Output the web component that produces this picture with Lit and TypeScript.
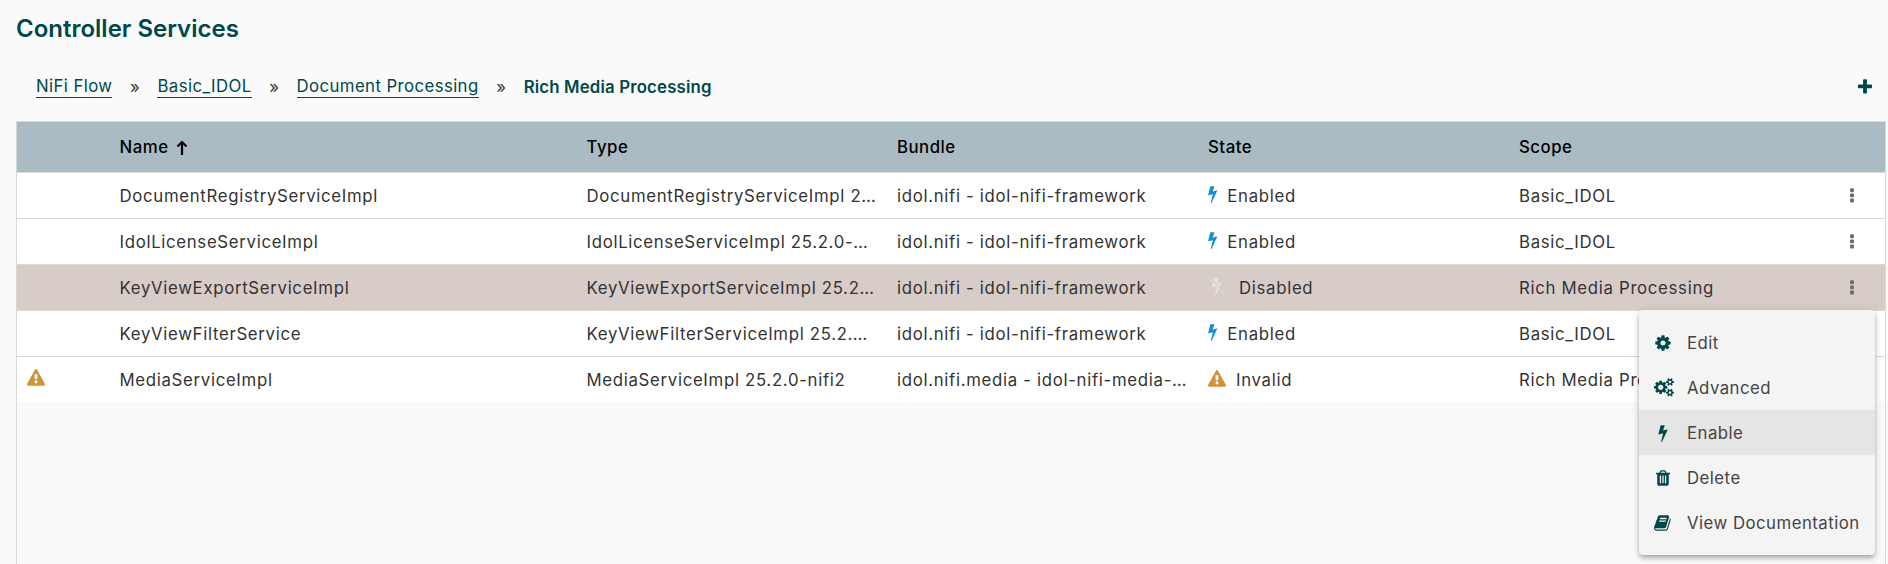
import { LitElement, html, css, svg } from "lit";
import { customElement } from "lit/decorators.js";

const P = {
  bolt: "M1333 566q18 20 7 44l-540 1157q-13 25-42 25-4 0-14-2-17-5-25.5-19t-4.5-30l197-808-406 101q-4 1-12 1-18 0-31-11-18-15-13-39l201-825q4-14 16-23t28-9h328q19 0 32 12.5t13 29.5q0 8-5 18l-171 463 396-98q8-2 12-2 19 0 34 15z",
  cog: "M1152 896q0-106-75-181t-181-75-181 75-75 181 75 181 181 75 181-75 75-181zm512-109v222q0 12-8 23t-20 13l-185 28q-19 54-39 91 35 50 107 138 10 12 10 25t-9 23q-27 37-99 108t-94 71q-12 0-26-9l-138-108q-44 23-91 38-16 136-29 186-7 28-36 28h-222q-14 0-24.5-8.5t-11.5-21.5l-28-184q-49-16-90-37l-141 107q-10 9-25 9-14 0-25-11-126-114-165-168-7-10-7-23 0-12 8-23 15-21 51-66.5t54-70.5q-27-50-41-99l-183-27q-13-2-21-12.5t-8-23.5v-222q0-12 8-23t19-13l186-28q14-46 39-92-40-57-107-138-10-12-10-24 0-10 9-23 26-36 98.5-107.5t94.5-71.5q13 0 26 10l138 107q44-23 91-38 16-136 29-186 7-28 36-28h222q14 0 24.5 8.5t11.5 21.5l28 184q49 16 90 37l142-107q9-9 24-9 13 0 25 10 129 119 165 170 7 8 7 22 0 12-8 23-15 21-51 66.5t-54 70.5q26 50 41 98l183 28q13 2 21 12.5t8 23.5z",
  trash: "M704 1376v-704q0-14-9-23t-23-9h-64q-14 0-23 9t-9 23v704q0 14 9 23t23 9h64q14 0 23-9t9-23zm256 0v-704q0-14-9-23t-23-9h-64q-14 0-23 9t-9 23v704q0 14 9 23t23 9h64q14 0 23-9t9-23zm256 0v-704q0-14-9-23t-23-9h-64q-14 0-23 9t-9 23v704q0 14 9 23t23 9h64q14 0 23-9t9-23zm-544-992h448l-48-117q-7-9-17-11h-317q-10 2-17 11zm928 32v64q0 14-9 23t-23 9h-96v948q0 83-47 143.5t-113 60.5h-832q-66 0-113-58.5t-47-141.5v-952h-96q-14 0-23-9t-9-23v-64q0-14 9-23t23-9h309l70-167q15-37 54-63t79-26h320q40 0 79 26t54 63l70 167h309q14 0 23 9t9 23z",
  book: "M1639 478q40 57 18 129l-275 906q-19 64-76.5 107.5t-122.5 43.5h-923q-77 0-148.5-53.5t-99.5-131.5q-24-67-2-127 0-4 3-27t4-37q1-8-3-21.5t-3-19.5q2-11 8-21t16.5-23.5 16.5-23.5q23-38 45-91.5t30-91.5q3-10 .5-30t-.5-28q3-11 17-28t17-23q21-36 42-92t25-90q1-9-2.5-32t.5-28q4-13 22-30.5t22-22.5q19-26 42.5-84.5t27.5-96.5q1-8-3-25.5t-2-26.5q2-8 9-18t18-23 17-21q8-12 16.5-30.5t15-35 16-36 19.5-32 26.5-23.5 36-11.5 47.5 5.5l-1 3q38-9 51-9h761q74 0 114 56t18 130l-274 906q-36 119-71.5 153.5t-128.5 34.5h-869q-27 0-38 15-11 16-1 43 24 70 144 70h923q29 0 56-15.5t35-41.5l300-987q7-22 5-57 38 15 59 43zm-1064 2q-4 13 2 22.5t20 9.5h608q13 0 25.5-9.5t16.5-22.5l21-64q4-13-2-22.5t-20-9.5h-608q-13 0-25.5 9.5t-16.5 22.5zm-83 256q-4 13 2 22.5t20 9.5h608q13 0 25.5-9.5t16.5-22.5l21-64q4-13-2-22.5t-20-9.5h-608q-13 0-25.5 9.5t-16.5 22.5z",
  warning: "M1024 1375v-190q0-14-9.5-23.5t-22.5-9.5h-192q-13 0-22.5 9.5t-9.5 23.5v190q0 14 9.5 23.5t22.5 9.5h192q13 0 22.5-9.5t9.5-23.5zm-2-374l18-459q0-12-10-19-13-11-24-11h-220q-11 0-24 11-10 7-10 21l17 457q0 10 10 16.5t24 6.5h185q14 0 23.5-6.5t10.5-16.5zm-14-934l768 1408q35 63-2 126-17 29-46.5 46t-63.5 17h-1536q-34 0-63.5-17t-46.5-46q-37-63-2-126l768-1408q17-31 47-49t65-18 65 18 47 49z",
  plus: "M1600 736v192q0 40-28 68t-68 28h-416v416q0 40-28 68t-68 28h-192q-40 0-68-28t-28-68v-416h-416q-40 0-68-28t-28-68v-192q0-40 28-68t68-28h416v-416q0-40 28-68t68-28h192q40 0 68 28t28 68v416h416q40 0 68 28t28 68z",
  cogs: "M896 896q0-106-75-181t-181-75-181 75-75 181 75 181 181 75 181-75 75-181zm768 512q0-52-38-90t-90-38-90 38-38 90q0 53 37.5 90.5t90.5 37.5 90.5-37.5 37.5-90.5zm0-1024q0-52-38-90t-90-38-90 38-38 90q0 53 37.5 90.5t90.5 37.5 90.5-37.5 37.5-90.5zm-384 421v185q0 10-7 19.5t-16 10.5l-155 24q-11 35-32 76 34 48 90 115 7 11 7 20 0 12-7 19-23 30-82.5 89.5t-78.5 59.5q-11 0-21-7l-115-90q-37 19-77 31-11 108-23 155-7 24-30 24h-186q-11 0-20-7.5t-10-17.5l-23-153q-34-10-75-31l-118 89q-7 7-20 7-11 0-21-8-144-133-144-160 0-9 7-19 10-14 41-53t47-61q-23-44-35-82l-152-24q-10-1-17-9.5t-7-19.5v-185q0-10 7-19.5t16-10.5l155-24q11-35 32-76-34-48-90-115-7-11-7-20 0-12 7-20 22-30 82-89t79-59q11 0 21 7l115 90q34-18 77-32 11-108 23-154 7-24 30-24h186q11 0 20 7.5t10 17.5l23 153q34 10 75 31l118-89q8-7 20-7 11 0 21 8 144 133 144 160 0 8-7 19-12 16-42 54t-45 60q23 48 34 82l152 23q10 2 17 10.5t7 19.5zm640 533v140q0 16-149 31-12 27-30 52 51 113 51 138 0 4-4 7-122 71-124 71-8 0-46-47t-52-68q-20 2-30 2t-30-2q-14 21-52 68t-46 47q-2 0-124-71-4-3-4-7 0-25 51-138-18-25-30-52-149-15-149-31v-140q0-16 149-31 13-29 30-52-51-113-51-138 0-4 4-7 4-2 35-20t59-34 30-16q8 0 46 46.5t52 67.5q20-2 30-2t30 2q51-71 92-112l6-2q4 0 124 70 4 3 4 7 0 25-51 138 17 23 30 52 149 15 149 31zm0-1024v140q0 16-149 31-12 27-30 52 51 113 51 138 0 4-4 7-122 71-124 71-8 0-46-47t-52-68q-20 2-30 2t-30-2q-14 21-52 68t-46 47q-2 0-124-71-4-3-4-7 0-25 51-138-18-25-30-52-149-15-149-31v-140q0-16 149-31 13-29 30-52-51-113-51-138 0-4 4-7 4-2 35-20t59-34 30-16q8 0 46 46.5t52 67.5q20-2 30-2t30 2q51-71 92-112l6-2q4 0 124 70 4 3 4 7 0 25-51 138 17 23 30 52 149 15 149 31z",
  dots: "M1088 1248v192q0 40-28 68t-68 28h-192q-40 0-68-28t-28-68v-192q0-40 28-68t68-28h192q40 0 68 28t28 68zm0-512v192q0 40-28 68t-68 28h-192q-40 0-68-28t-28-68v-192q0-40 28-68t68-28h192q40 0 68 28t28 68zm0-512v192q0 40-28 68t-68 28h-192q-40 0-68-28t-28-68v-192q0-40 28-68t68-28h192q40 0 68 28t28 68z",
};

function icon(d: string, cls: string, vb = "0 0 1792 1792") {
  return html`<svg class=${cls} viewBox=${vb} aria-hidden="true">${svg`<path d=${d} fill="currentColor"></path>`}</svg>`;
}

const BOLT_VB = "430 100 930 1700";

const boltSlash = html`<svg class="stoff" viewBox="60 60 1680 1780" aria-hidden="true">
  ${svg`<path d=${P.bolt} fill="currentColor"></path><path d="M200 90 1740 1710" stroke="#d8ccc9" stroke-width="110"></path><path d="M120 140 1660 1760" stroke="currentColor" stroke-width="90"></path>`}
</svg>`;

type Row = { name: string; type: string; bundle: string; state: string; scope: string; sel?: boolean; warn?: boolean };

const ROWS: Row[] = [
  { name: "DocumentRegistryServiceImpl", type: "DocumentRegistryServiceImpl 25.2.0-nifi2", bundle: "idol.nifi - idol-nifi-framework", state: "Enabled", scope: "Basic_IDOL" },
  { name: "IdolLicenseServiceImpl", type: "IdolLicenseServiceImpl 25.2.0-nifi2", bundle: "idol.nifi - idol-nifi-framework", state: "Enabled", scope: "Basic_IDOL" },
  { name: "KeyViewExportServiceImpl", type: "KeyViewExportServiceImpl 25.2.0-nifi2", bundle: "idol.nifi - idol-nifi-framework", state: "Disabled", scope: "Rich Media Processing", sel: true },
  { name: "KeyViewFilterService", type: "KeyViewFilterServiceImpl 25.2.0-nifi2", bundle: "idol.nifi - idol-nifi-framework", state: "Enabled", scope: "Basic_IDOL" },
  { name: "MediaServiceImpl", type: "MediaServiceImpl 25.2.0-nifi2", bundle: "idol.nifi.media - idol-nifi-media-nar", state: "Invalid", scope: "Rich Media Processing", warn: true },
];

const MENU = [
  { t: "Edit", i: icon(P.cog, "mi") },
  { t: "Advanced", i: icon(P.cogs, "mi wide", "0 0 1920 1792") },
  { t: "Enable", i: icon(P.bolt, "mi"), hover: true },
  { t: "Delete", i: icon(P.trash, "mi") },
  { t: "View Documentation", i: icon(P.book, "mi") },
];

@customElement("app-root")
export class AppRoot extends LitElement {
  static styles = css`
    :host {
      display: block;
      position: relative;
      height: 564px;
      overflow: hidden;
      background: #fafafa;
      font-family: Inter, "Liberation Sans", sans-serif;
      font-size: 16.8px;
      color: #333;
    }
    .page { display: flex; flex-direction: column; height: 100%; padding: 0 0 0 16px; box-sizing: border-box; }
    h1 { margin: 0; padding-top: 13px; height: 56px; box-sizing: border-box; font-size: 24px; line-height: 32px; font-weight: 600; color: #004849; letter-spacing: 0; }
    .crumbs { display: flex; align-items: center; height: 62px; margin-bottom: 3px; padding-left: 20px; box-sizing: border-box; font-size: 16.8px; color: #004849; letter-spacing: .4px; }
    .crumbs a { color: #004849; border-bottom: 1px solid #004849; line-height: 21px; }
    .sep { width: 45px; text-align: center; color: #333; letter-spacing: 0; }
    .cur { font-weight: 600; letter-spacing: .17px; }
    .plus { margin-left: auto; width: 18px; height: 18px; color: #004849; margin-right: 14.500px; }
    .table { flex: 1; margin-right: 2px; border-left: 1px solid #d9d9d9; border-right: 1px solid #d9d9d9; border-top: 1px solid #d9d9d9; }
    .row { display: grid; grid-template-columns: 86.5px 467px 310.500px 311px 311px 1fr 46px; align-items: center; height: 46px; box-sizing: border-box; border-bottom: 1px solid #d9d9d9; background: #fff; font-size: 16.8px; letter-spacing: .68px; }
    .row.head { height: 51px; background: #aabbc3; color: #000; font-weight: 500; letter-spacing: .5px; }
    .row.sel { background: #d8ccc9; }
    .row.last { border-bottom: 0; height: 45px; }
    .c { padding: 0 4px 0 16px; white-space: nowrap; overflow: hidden; text-overflow: ellipsis; }
    .c.first { padding: 0 0 0 10px; display: flex; }
    .name { display: inline-flex; align-items: center; gap: 8px; }
    .arrow { width: 12px; height: 15px; }
    .state { display: flex; align-items: center; }
    .st { width: 9.3px; height: 17px; color: #1491d1; flex: none; margin: -2px 10px 0 0; }
    .stoff { width: 18px; height: 19px; color: #e2e4e4; flex: none; margin-right: 13px; margin-top: -2px; }
    .warn { width: 18px; height: 18px; color: #cf9338; flex: none; margin-bottom: 4px; }
    .state .warn { margin-right: 10px; margin-bottom: 2px; }
    .dots { width: 18px; height: 18px; color: #6b6b6b; display: block; margin: 0 0 0 4px; }
    .menu { position: absolute; left: 1639px; top: 310px; width: 236px; box-sizing: border-box; padding: 10px 0; background: #f4f4f4; border-radius: 4px; box-shadow: 0 2px 4px -1px rgba(0,0,0,.2), 0 4px 5px rgba(0,0,0,.14), 0 1px 10px rgba(0,0,0,.12); }
    .mitem { display: flex; align-items: center; height: 45px; padding: 0 12px 0 16px; font-size: 16.8px; color: #444; letter-spacing: .47px; white-space: nowrap; }
    .mitem.hover { background: #e5e5e5; }
    .miw { width: 32px; flex: none; display: flex; }
    .mi { width: 18px; height: 18px; color: #004849; margin-left: -1px; }
    .mi.wide { width: 20px; height: 18.6px; }
  `;

  render() {
    return html`
      <div class="page">
        <h1>Controller Services</h1>
        <div class="crumbs">
          <a>NiFi Flow</a><span class="sep">»</span>
          <a>Basic_IDOL</a><span class="sep">»</span>
          <a>Document Processing</a><span class="sep">»</span>
          <span class="cur">Rich Media Processing</span>
          ${icon(P.plus, "plus")}
        </div>
        <div class="table">
          <div class="row head">
            <div class="c"></div>
            <div class="c"><span class="name">Name
              <svg class="arrow" viewBox="0 0 12 15" aria-hidden="true">${svg`<path d="M6 15V2M1.5 6.5 6 2l4.500 4.500" fill="none" stroke="currentColor" stroke-width="2.2"></path>`}</svg></span></div>
            <div class="c">Type</div><div class="c">Bundle</div><div class="c">State</div><div class="c">Scope</div><div></div>
          </div>
          ${ROWS.map((r, i) => html`
            <div class="row ${r.sel ? "sel" : ""} ${i === ROWS.length - 1 ? "last" : ""}">
              <div class="c first">${r.warn ? icon(P.warning, "warn") : ""}</div>
              <div class="c">${r.name}</div>
              <div class="c">${r.type}</div>
              <div class="c">${r.bundle}</div>
              <div class="c state">
                ${r.state === "Enabled" ? icon(P.bolt, "st", BOLT_VB) : r.state === "Disabled" ? boltSlash : icon(P.warning, "warn")}
                <span>${r.state}</span>
              </div>
              <div class="c">${r.scope}</div>
              <div>${icon(P.dots, "dots")}</div>
            </div>`)}
        </div>
      </div>
      <div class="menu">
        ${MENU.map((m) => html`<div class="mitem ${m.hover ? "hover" : ""}"><span class="miw">${m.i}</span>${m.t}</div>`)}
      </div>
    `;
  }
}
